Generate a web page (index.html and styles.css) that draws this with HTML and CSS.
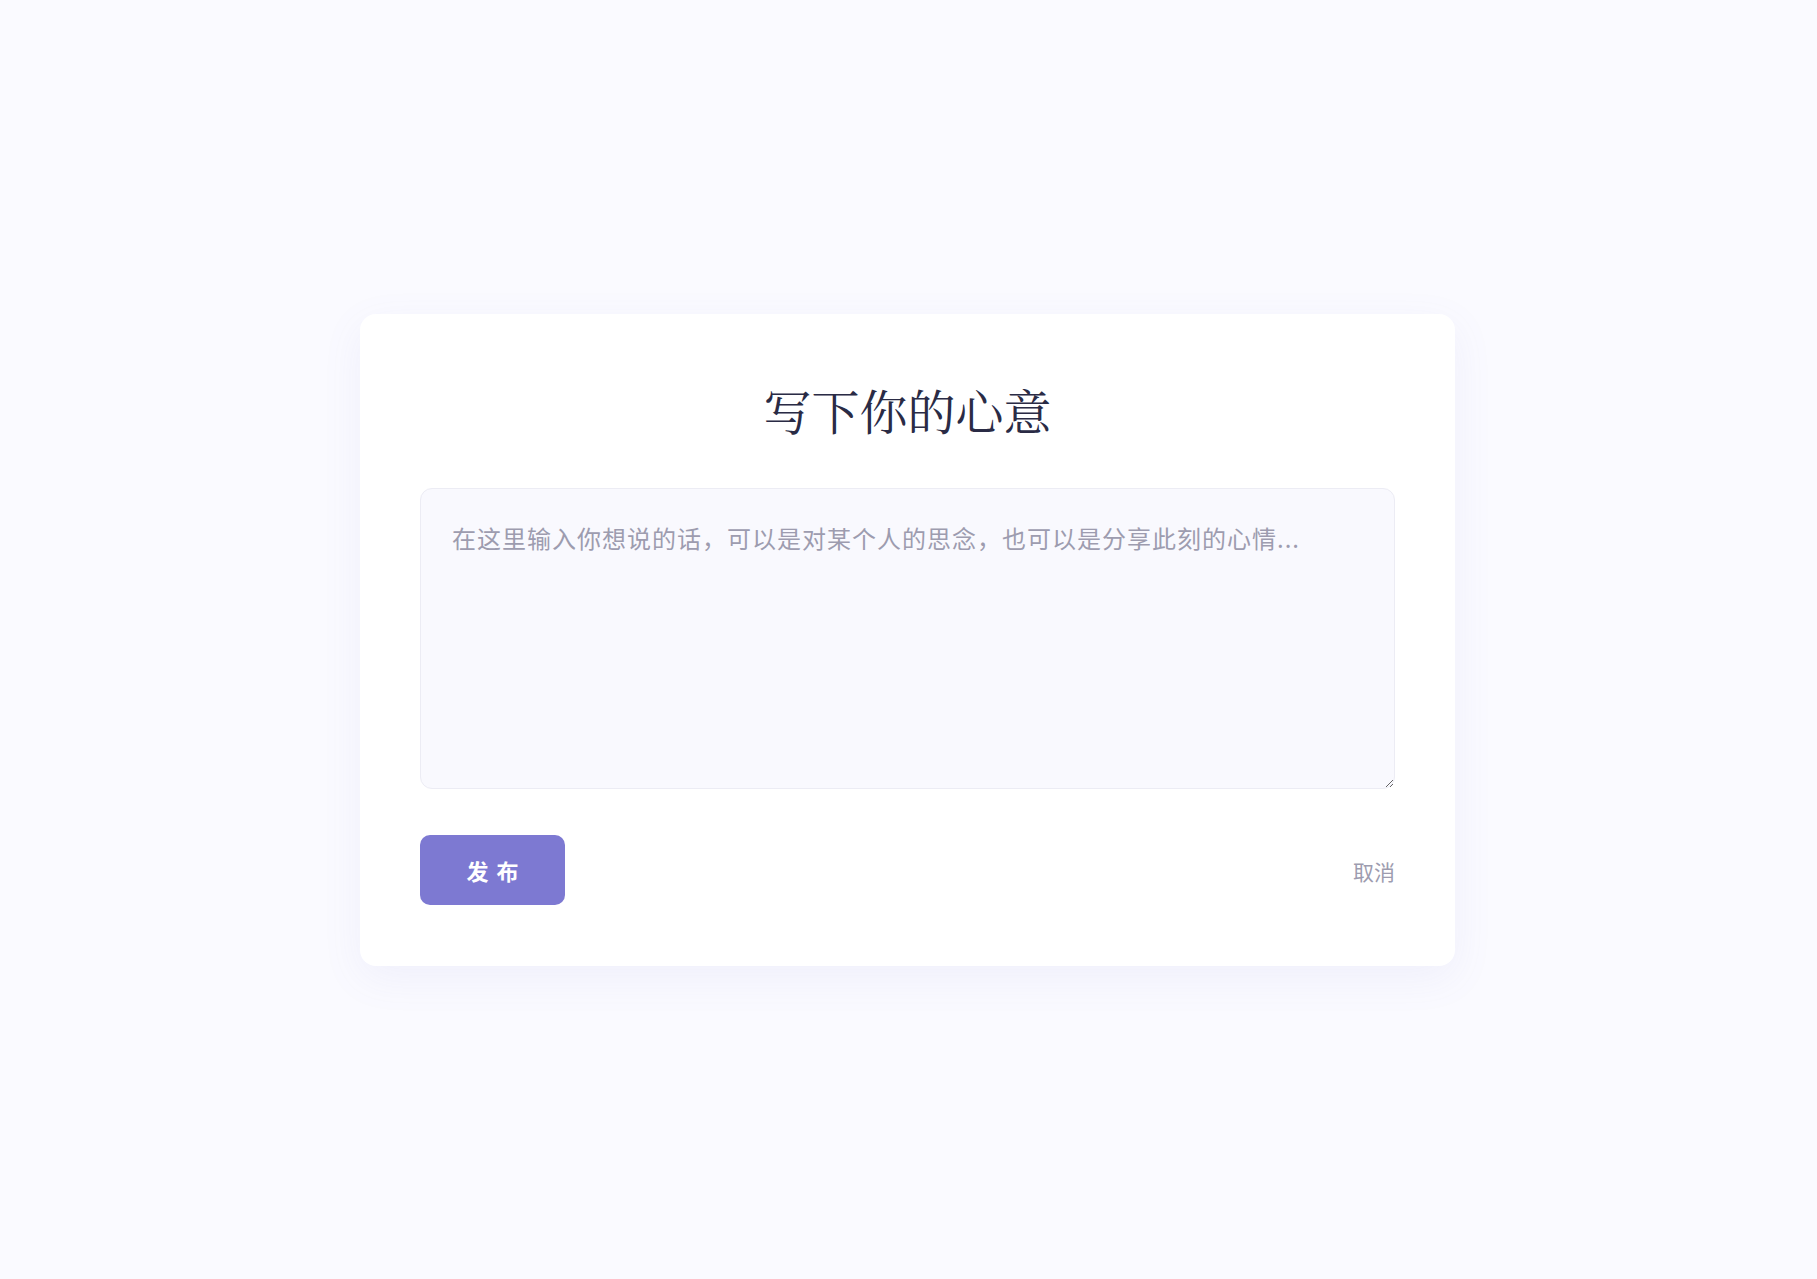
FILE: index.html
```html
<!DOCTYPE html>
<html lang="zh-CN">
<head>
<meta charset="utf-8">
<title>写下你的心意</title>
<link rel="stylesheet" href="styles.css">
</head>
<body>
<main class="page">
  <section class="card">
    <h1 class="title">写下你的心意</h1>
    <textarea class="message" placeholder="在这里输入你想说的话，可以是对某个人的思念，也可以是分享此刻的心情..."></textarea>
    <div class="actions">
      <button class="btn-publish" type="button">发布</button>
      <a class="btn-cancel" href="#">取消</a>
    </div>
  </section>
</main>
</body>
</html>
```

FILE: styles.css
```css
* { box-sizing: border-box; }

html, body {
  margin: 0;
  padding: 0;
  height: 100%;
}

body {
  background: #fafaff;
  font-family: "Noto Sans CJK SC", "Noto Sans", sans-serif;
}

.page {
  min-height: 100vh;
  display: flex;
  align-items: center;
  justify-content: center;
  padding-right: 2px;
}

.card {
  width: 1095px;
  background: #ffffff;
  border-radius: 16px;
  padding: 60px 60px 61px;
  box-shadow: 0 12px 40px rgba(110, 110, 200, 0.08);
  display: flex;
  flex-direction: column;
}

.title {
  margin: 0 0 42px;
  text-align: center;
  font-family: "Noto Serif CJK SC", "Source Han Serif SC", "AR PL UMing CN", "Liberation Serif", serif;
  font-weight: 400;
  font-size: 48px;
  line-height: 72px;
  color: #2a2b45;
}

.message {
  display: block;
  width: 100%;
  height: 301px;
  padding: 30px 31px;
  border: 1px solid #ececf4;
  border-radius: 12px;
  background: #f9f9fe;
  font-family: "Noto Sans CJK SC", "Noto Sans", sans-serif;
  font-size: 24px;
  letter-spacing: 1px;
  line-height: 1.6;
  color: #2a2b45;
  outline: none;
  resize: vertical;
}

.message::placeholder {
  color: #9d9caf;
}

.actions {
  margin-top: 46px;
  display: flex;
  align-items: center;
  justify-content: space-between;
}

.btn-publish {
  width: 145px;
  height: 70px;
  border: none;
  border-radius: 10px;
  background: #7d79d2;
  color: #ffffff;
  font-family: "Noto Sans CJK SC", "Noto Sans", sans-serif;
  font-size: 22px;
  font-weight: 700;
  letter-spacing: 8px;
  text-indent: 8px;
  cursor: pointer;
}

.btn-cancel {
  font-size: 21px;
  line-height: 1;
  padding-top: 3px;
  color: #9d9caf;
  text-decoration: none;
}
```
